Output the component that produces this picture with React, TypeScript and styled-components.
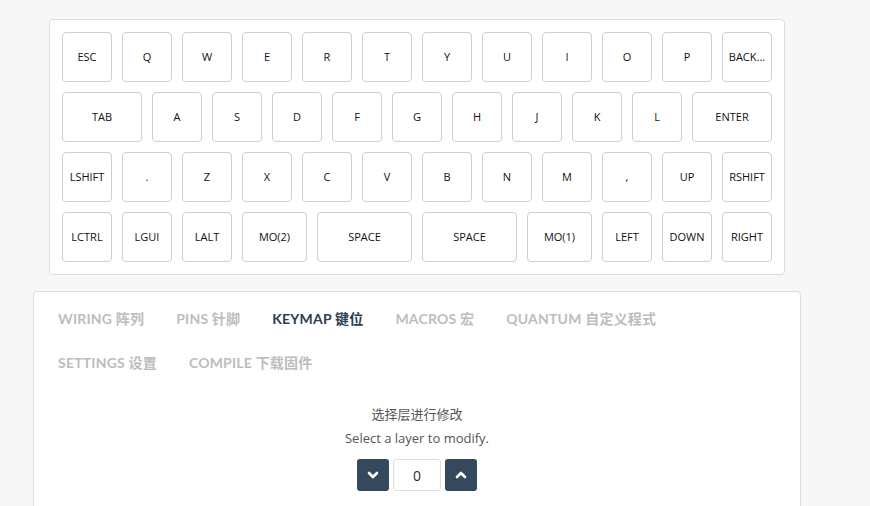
import React from "react";
import styled, { createGlobalStyle } from "styled-components";

const Global = createGlobalStyle`
  html, body { margin: 0; padding: 0; background: #f7f7f7; }
  body { font-family: "Open Sans", "Noto Sans", sans-serif; }
`;

const Page = styled.div`
  width: 768px;
  margin-left: 33px;
  padding-top: 19px;
  display: flex;
  flex-direction: column;
  align-items: center;
  gap: 16px;
`;

const KeyboardCard = styled.div`
  box-sizing: border-box;
  width: 736px;
  background: #fff;
  border: 1px solid #dcdcdc;
  border-radius: 4px;
  padding: 12px;
  display: flex;
  flex-direction: column;
  gap: 10px;
`;

const KeyRow = styled.div`
  display: flex;
  gap: 10px;
`;

const Key = styled.div<{ $u: number }>`
  box-sizing: border-box;
  width: ${(p) => p.$u * 60 - 10}px;
  height: 50px;
  padding-bottom: 2px;
  border: 1px solid #cfcfcf;
  border-radius: 4px;
  background: #fff;
  display: flex;
  align-items: center;
  justify-content: center;
  font-family: "Open Sans", "Noto Sans", sans-serif;
  font-size: 11px;
  color: #111;
  white-space: nowrap;
`;

const TabCard = styled.div`
  box-sizing: border-box;
  width: 768px;
  height: 230px;
  background: #fff;
  border: 1px solid #dcdcdc;
  border-bottom: none;
  border-radius: 4px 4px 0 0;
  padding: 5px 8px 0;
`;

const Tabs = styled.div`
  display: flex;
  flex-wrap: wrap;
  width: 640px;
`;

const Tab = styled.div<{ $active?: boolean }>`
  padding: 12px 16px;
  line-height: 20px;
  font-family: Lato, "Noto Sans CJK SC", sans-serif;
  font-weight: 700;
  font-size: 14px;
  letter-spacing: 0.2px;
  color: ${(p) => (p.$active ? "#2c3e50" : "#bdbdbd")};
  white-space: nowrap;
`;

const Content = styled.div`
  display: flex;
  flex-direction: column;
  align-items: center;
  padding-top: 17px;
`;

const Line = styled.div`
  line-height: 24px;
  font-size: 13px;
  color: #555;
  font-family: "Open Sans", "Noto Sans CJK SC", sans-serif;
`;

const Stepper = styled.div`
  display: flex;
  gap: 4px;
  margin-top: 9px;
`;

const StepButton = styled.button`
  width: 32px;
  height: 32px;
  border: none;
  border-radius: 3px;
  background: #34495e;
  display: flex;
  align-items: center;
  justify-content: center;
  padding: 0;
`;

const LayerInput = styled.div`
  box-sizing: border-box;
  width: 48px;
  height: 32px;
  border: 1px solid #ddd;
  border-radius: 3px;
  display: flex;
  align-items: center;
  justify-content: center;
  font-size: 14px;
  color: #1f2d3d;
`;

const Chevron = ({ up }: { up?: boolean }) => (
  <svg width="12" height="12" viewBox="0 0 12 12">
    <path
      d={up ? "M2 8 L6 4 L10 8" : "M2 4 L6 8 L10 4"}
      fill="none"
      stroke="#fff"
      strokeWidth="2.6"
      strokeLinecap="round"
      strokeLinejoin="round"
    />
  </svg>
);

type K = [string, number];
const rows: K[][] = [
  [["ESC", 1], ["Q", 1], ["W", 1], ["E", 1], ["R", 1], ["T", 1], ["Y", 1], ["U", 1], ["I", 1], ["O", 1], ["P", 1], ["BACK...", 1]],
  [["TAB", 1.5], ["A", 1], ["S", 1], ["D", 1], ["F", 1], ["G", 1], ["H", 1], ["J", 1], ["K", 1], ["L", 1], ["ENTER", 1.5]],
  [["LSHIFT", 1], [".", 1], ["Z", 1], ["X", 1], ["C", 1], ["V", 1], ["B", 1], ["N", 1], ["M", 1], [",", 1], ["UP", 1], ["RSHIFT", 1]],
  [["LCTRL", 1], ["LGUI", 1], ["LALT", 1], ["MO(2)", 1.25], ["SPACE", 1.75], ["SPACE", 1.75], ["MO(1)", 1.25], ["LEFT", 1], ["DOWN", 1], ["RIGHT", 1]],
];

const tabs = [
  "WIRING 阵列",
  "PINS 针脚",
  "KEYMAP 键位",
  "MACROS 宏",
  "QUANTUM 自定义程式",
  "SETTINGS 设置",
  "COMPILE 下载固件",
];

export default function App() {
  return (
    <>
      <Global />
      <Page>
        <KeyboardCard>
          {rows.map((r, i) => (
            <KeyRow key={i}>
              {r.map(([label, u], j) => (
                <Key key={j} $u={u}>
                  {label}
                </Key>
              ))}
            </KeyRow>
          ))}
        </KeyboardCard>
        <TabCard>
          <Tabs>
            {tabs.map((t) => (
              <Tab key={t} $active={t.startsWith("KEYMAP")}>
                {t}
              </Tab>
            ))}
          </Tabs>
          <Content>
            <Line>选择层进行修改</Line>
            <Line>Select a layer to modify.</Line>
            <Stepper>
              <StepButton>
                <Chevron />
              </StepButton>
              <LayerInput>0</LayerInput>
              <StepButton>
                <Chevron up />
              </StepButton>
            </Stepper>
          </Content>
        </TabCard>
      </Page>
    </>
  );
}
